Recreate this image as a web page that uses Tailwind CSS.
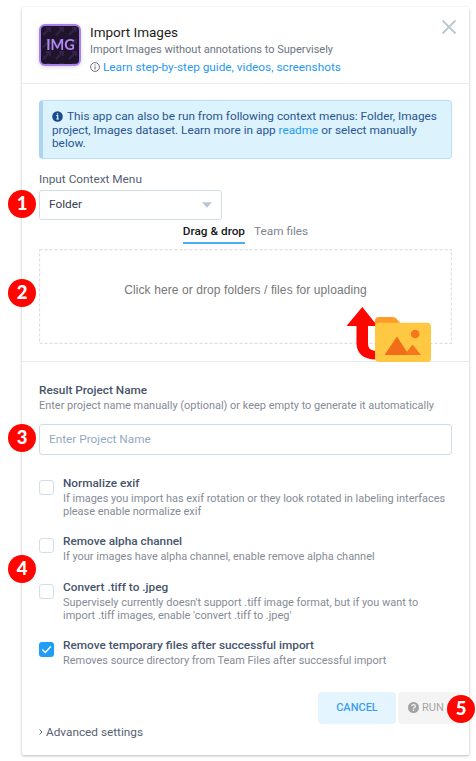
<!DOCTYPE html>
<html lang="en">
<head>
<meta charset="utf-8">
<title>Import Images</title>
<script src="https://cdn.jsdelivr.net/npm/@tailwindcss/browser@4"></script>
</head>
<body class="bg-white w-[476px] h-[761px] overflow-hidden font-[Roboto,'Liberation_Sans',sans-serif]">
<div class="relative w-[476px] h-[761px] pt-[7px] pl-[22px]">
  <main class="w-[447px] h-[748px] rounded-[2px] bg-white shadow-[0_1px_3px_rgba(0,0,0,0.28)] whitespace-nowrap">
    <header class="h-[77px] border-b border-[#ececec] flex pl-[17px] pt-[17px] pr-[12px]">
      <svg class="w-[42px] h-[42px] shrink-0 drop-shadow-sm" viewBox="0 0 42 42">
        <defs><pattern id="arrows" width="13" height="12" patternUnits="userSpaceOnUse" patternTransform="translate(2 1)"><path d="M2 10L9 3M5 3h4v4" fill="none" stroke="#32234a" stroke-width="1.8"/></pattern></defs>
        <rect x="1" y="1" width="40" height="40" rx="5" fill="#20142d"/>
        <rect x="1" y="1" width="40" height="40" rx="5" fill="url(#arrows)" stroke="#a981ee" stroke-width="2"/>
        <text x="21.500" y="26" text-anchor="middle" textLength="28.500" lengthAdjust="spacingAndGlyphs" font-family="Lato" font-weight="700" font-size="14.5" fill="#b288f5">IMG</text>
      </svg>
      <div class="ml-[9px] flex-1">
        <h1 class="text-[13.5px] leading-[18px] text-[#1c1d20] mt-[-1px]">Import Images</h1>
        <p class="text-[11px] leading-[16px] pt-[1px] text-[#6b7681]">Import Images without annotations to Supervisely</p>
        <a class="flex items-center text-[11.8px] leading-[18px] text-[#2699f0]"><svg class="w-[10px] h-[10px] mr-[3px]" viewBox="0 0 10 10" fill="none" stroke="#5b6470"><circle cx="5" cy="5" r="4.4" stroke-width=".9"/><path d="M5 4.4v3M5 2.4v1.1"/></svg>Learn step-by-step guide, videos, screenshots</a>
      </div>
      <svg class="w-[16px] h-[16px] mt-[-5px]" viewBox="0 0 16 16"><path d="M1.5 1.5l13 13M14.500 1.500l-13 13" stroke="#b9c8d3" stroke-width="1.8"/></svg>
    </header>
    <section class="h-[278px] border-b border-[#e9e9e9] px-[17px] pt-[16px]">
      <div class="h-[59px] rounded-[4px] border border-[#b9e0f6] border-l-[4px] border-l-[#abd3f2] bg-[#dcf2fd] pl-[9px] pt-[9px] text-[11.8px] leading-[13.600px] text-[#2a5591]">
        <p class="flex items-center"><svg class="w-[11px] h-[11px] mr-[4px]" viewBox="0 0 11 11"><circle cx="5.500" cy="5.500" r="5.300" fill="#174b8c"/><path d="M4.300 4.700h1.400v3.300M4.200 8h2.800M5.500 2.300v1.300" fill="none" stroke="#dcf2fd" stroke-width="1.200"/></svg>This app can also be run from following context menus: Folder, Images</p>
        <p>project, Images dataset. Learn more in app <a class="text-[#239df3]">readme</a> or select manually</p>
        <p>below.</p>
      </div>
      <label class="block mt-[11px] text-[11.8px] leading-[18px] text-[#566173]">Input Context Menu</label>
      <div class="mt-[2px] w-[183px] h-[30px] border border-[#d3dde6] rounded-[3px] flex items-center justify-between pl-[9px] pr-[9px] text-[11.8px] text-[#35404f]">Folder<svg class="w-[10px] h-[6px]" viewBox="0 0 10 6"><path d="M0 .3h10L5 5.700z" fill="#b7c7d5"/></svg></div>
      <nav class="flex justify-center gap-[9px] mt-[2px] text-[11.8px] leading-[18px] h-[22px]">
        <span class="font-medium text-[#16181c] border-b-2 border-[#4aaef3]">Drag &amp; drop</span><span class="text-[#808490]">Team files</span>
      </nav>
      <div class="relative mt-[5px] h-[95px] text-center text-[12px] leading-[18px] pt-[32px] text-[#777]">
        <svg class="absolute inset-0 w-full h-full" viewBox="0 0 413 95"><rect x=".5" y=".5" width="412" height="94" fill="none" stroke="#dedede" stroke-width="1.300" stroke-dasharray="3 2"/></svg>
        <span class="font-[Arimo,'Liberation_Sans',sans-serif] tracking-[0.09px]">Click here or drop folders / files for uploading</span>
      </div>
    </section>
    <section class="px-[17px] pt-[19px]">
      <h2 class="text-[11.8px] leading-[18px] font-medium text-[#46546a]">Result Project Name</h2>
      <p class="text-[10.95px] leading-[14px] text-[#858b96]">Enter project name manually (optional) or keep empty to generate it automatically</p>
      <div class="mt-[11px] h-[31px] border border-[#cfdbe6] rounded-[3px] pl-[9px] flex items-center text-[11.8px] text-[#96a8bf]">Enter Project Name</div>
      <div class="flex mt-[19px] h-[58px]"><span class="w-[15px] h-[15px] mt-[6px] mr-[9px] border border-[#d3dee8] rounded-[3px]"></span><div><h3 class="text-[11.8px] leading-[18px] font-medium text-[#46546a]">Normalize exif</h3><p class="text-[10.95px] leading-[12.700px] pt-[1px] text-[#858b96]">If images you import has exif rotation or they look rotated in labeling interfaces<br>please enable normalize exif</p></div></div>
      <div class="flex h-[46px]"><span class="w-[15px] h-[15px] mt-[6px] mr-[9px] border border-[#d3dee8] rounded-[3px]"></span><div><h3 class="text-[11.8px] leading-[18px] font-medium text-[#46546a]">Remove alpha channel</h3><p class="text-[10.95px] leading-[12.700px] pt-[1px] text-[#858b96]">If your images have alpha channel, enable remove alpha channel</p></div></div>
      <div class="flex h-[58px]"><span class="w-[15px] h-[15px] mt-[6px] mr-[9px] border border-[#d3dee8] rounded-[3px]"></span><div><h3 class="text-[11.8px] leading-[18px] font-medium text-[#46546a]">Convert .tiff to .jpeg</h3><p class="text-[10.95px] leading-[12.700px] pt-[1px] text-[#858b96]">Supervisely currently doesn't support .tiff image format, but if you want to<br>import .tiff images, enable 'convert .tiff to .jpeg'</p></div></div>
      <div class="flex h-[56px]"><svg class="w-[15px] h-[15px] mt-[6px] mr-[9px]" viewBox="0 0 15 15"><rect width="15" height="15" rx="3" fill="#209df7"/><path d="M3.300 7.500l3 3 5.500-6" stroke="#fff" stroke-width="1.500" fill="none"/></svg><div><h3 class="text-[11.8px] leading-[18px] font-medium text-[#46546a]">Remove temporary files after successful import</h3><p class="text-[10.95px] leading-[12.700px] pt-[1px] text-[#858b96]">Removes source directory from Team Files after successful import</p></div></div>
      <div class="flex justify-end gap-[2px] h-[32px] mr-[-9px] text-[11px]">
        <button class="w-[78px] rounded-[4px] bg-[#e5f5ff] text-[#3a9ff2] font-medium pt-[1px]">CANCEL</button>
        <button class="w-[63px] rounded-[4px] bg-[#f4f4f4] text-[#a5a5a5] flex items-center pl-[10px]"><svg class="w-[11px] h-[11px] mr-[3px] -mt-[2px]" viewBox="0 0 11 11"><circle cx="5.500" cy="5.500" r="5.500" fill="#a2a2a2"/><path d="M3.700 4.200c0-2.300 3.700-2.100 3.700 0 0 1.400-1.900 1.200-1.900 2.600M5.500 7.600V9" fill="none" stroke="#f4f4f4" stroke-width="1.300"/></svg><span class="pt-[1px]">RUN</span></button>
      </div>
      <a class="flex items-center text-[11.8px] leading-[16px] text-[#566173]"><svg class="w-[4px] h-[6px] mr-[3px]" viewBox="0 0 4 6"><path d="M.5.500L3 3 .5 5.500" fill="none" stroke="#566173"/></svg>Advanced settings</a>
    </section>
  </main>
  <svg class="absolute left-[346px] top-[306px] w-[86px] h-[57px]" viewBox="0 0 86 57">
    <path d="M16.300 1L31.500 20H22v17c0 6 3 8 10 8v8.500h-2C17 53.500 10.500 47 10.500 37V20H.500z" fill="#fe0500"/>
    <path d="M29 17v-2q0-4 4-4h14q2 0 3.500 1.700L55 18v6H29z" fill="#ff9b28"/>
    <rect x="29" y="16.700" width="56" height="39.300" rx="4" fill="#ffc842"/>
    <path d="M38.700 49l12.300-18.200 10 15 5.500-7.200L75 49z" fill="#f5771c"/><path d="M38.700 49l12.300-18.200L61.500 49z" fill="#f16d17"/>
    <circle cx="69.200" cy="28" r="4.300" fill="#f5771c"/>
  </svg>
  <b class="absolute left-[8px] top-[190px] size-[28px] rounded-full bg-[#fe0500] text-white text-center text-[18.5px] leading-[27px] font-black font-[Lato,sans-serif]">1</b>
  <b class="absolute left-[8px] top-[278.5px] size-[28px] rounded-full bg-[#fe0500] text-white text-center text-[18.5px] leading-[27px] font-black font-[Lato,sans-serif]">2</b>
  <b class="absolute left-[8px] top-[424px] size-[28px] rounded-full bg-[#fe0500] text-white text-center text-[18.5px] leading-[27px] font-black font-[Lato,sans-serif]">3</b>
  <b class="absolute left-[8px] top-[554.5px] size-[28px] rounded-full bg-[#fe0500] text-white text-center text-[18.5px] leading-[27px] font-black font-[Lato,sans-serif]">4</b>
  <b class="absolute left-[447px] top-[695px] size-[28px] rounded-full bg-[#fe0500] text-white text-center text-[18.5px] leading-[27px] font-black font-[Lato,sans-serif]">5</b>
</div>
</body>
</html>
